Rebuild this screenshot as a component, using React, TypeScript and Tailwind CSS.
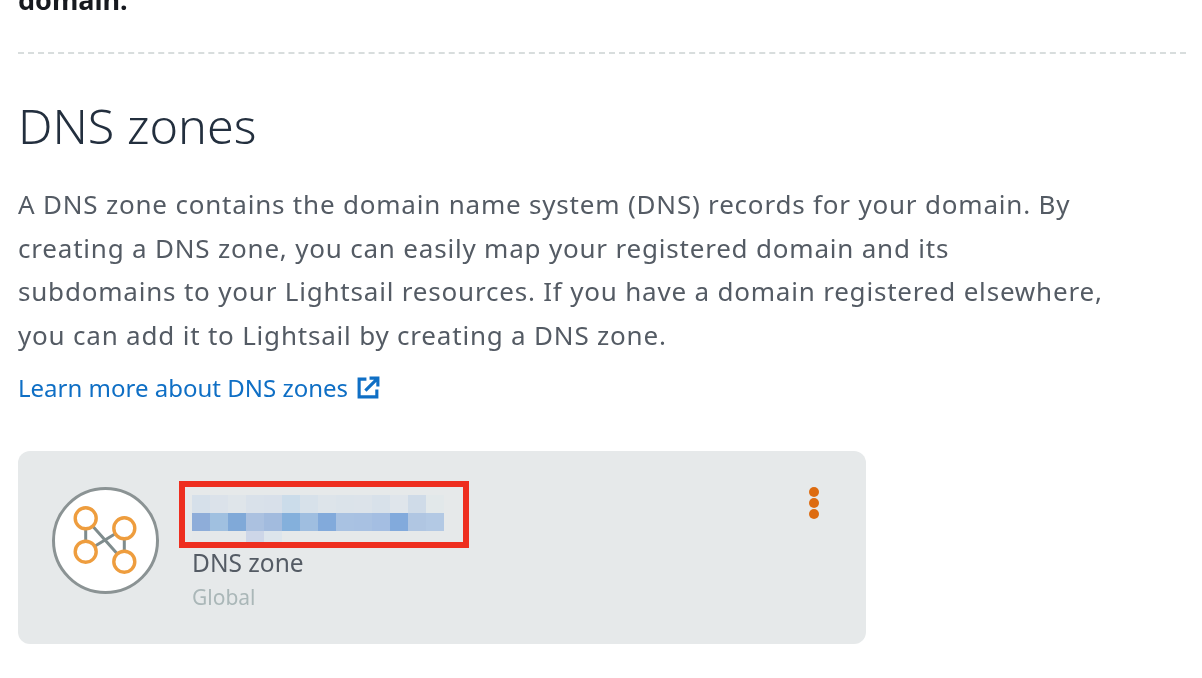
const pixelRows = [
  ['#d6e0ea', '#dbe2ea', '#dfe5ea', '#d9e1ea', '#d8e0ea', '#cbdcea', '#d7e1ea', '#dde4ea', '#dbe3ea', '#dce3ea', '#d8e1ea', '#dfe5eb', '#cfdbe8', '#e2e8ea'],
  ['#8eadd9', '#a0c0e0', '#80a9d8', '#abc1e0', '#a2bbde', '#84b0dc', '#9fbee0', '#82aadb', '#a9c2e2', '#a8c1e2', '#a4bee2', '#82aadc', '#b0c6e2', '#b3c9e4'],
  ['#e5e8ea', '#e5e8ea', '#e5e8ea', '#cdd6e8', '#dde5ec'],
];

function ZoneIcon() {
  return (
    <div className="w-[107px] h-[107px] shrink-0 rounded-full border-[3px] border-[#8b9394] bg-white flex items-center justify-center">
      <svg width="101" height="101" viewBox="55 490 101 101" fill="none">
        <path d="M85.7 518.3v33.4M124.3 528.3v33.4M85.7 551.7l38.6-23.4M85.7 518.3l38.6 43.4" stroke="#7f8c8d" strokeWidth="3" />
        {[[85.7, 518.3], [124.3, 528.3], [85.7, 551.7], [124.3, 561.7]].map(([cx, cy]) => (
          <circle key={cx + '-' + cy} cx={cx} cy={cy} r="10.5" fill="white" stroke="#ee9d3e" strokeWidth="3.4" />
        ))}
      </svg>
    </div>
  );
}

export default function App() {
  return (
    <div className="h-[678px] overflow-hidden bg-white px-[18px] font-['Noto_Sans',sans-serif] text-[#545b64] blur-[0.5px]">
      <p className="-mt-[18px] text-[27px] leading-[36px] font-bold text-[#16191f]">domain.</p>

      <div className="mt-[34px] w-[1168px] border-t-2 border-dashed border-[#d8dddd]" />

      <h1 className="mt-[39px] text-[48.5px] leading-[64px] font-light text-[#232f3e]">DNS zones</h1>

      <p className="mt-[26px] w-[1160px] text-[26px] tracking-[0.8px] leading-[43.67px] text-[#545b64]">
        A DNS zone contains the domain name system (DNS) records for your domain. By<br />
        creating a DNS zone, you can easily map your registered domain and its<br />
        subdomains to your Lightsail resources. If you have a domain registered elsewhere,<br />
        you can add it to Lightsail by creating a DNS zone.
      </p>

      <a className="mt-[12px] flex items-center gap-[8px] text-[24px] leading-[36px] text-[#0f6fc5]">
        Learn more about DNS zones
        <svg width="25" height="25" viewBox="0 0 24 24" fill="none" stroke="currentColor" strokeWidth="3">
          <path d="M10 4H3v17h17v-7" />
          <path d="M9 15L21 3M13 3h8v8" />
        </svg>
      </a>

      <div className="mt-[45px] w-[848px] h-[193px] rounded-[12px] bg-[#e6e9ea] pt-[36px] pl-[34px] pr-[47px] flex items-start">
        <ZoneIcon />
        <div className="ml-[20px] -mt-[6px]">
          <div className="w-[290px] h-[67px] border-[6px] border-[#ee2e1f] pl-[7px] pt-[8px] overflow-hidden">
            {pixelRows.map((row, i) => (
              <div key={i} className="flex h-[18px]">
                {row.map((c, j) => (
                  <div key={j} className="w-[18px] h-[18px]" style={{ backgroundColor: c }} />
                ))}
              </div>
            ))}
          </div>
          <p className="ml-[13px] mt-[-1px] text-[24.5px] leading-[32px] text-[#545b64]">DNS zone</p>
          <p className="ml-[13px] mt-[3px] text-[21px] leading-[30px] text-[#aab7b8]">Global</p>
        </div>
        <div className="ml-auto flex flex-col gap-[1px]">
          <span className="w-[10px] h-[10px] rounded-full bg-[#dd6b10]" />
          <span className="w-[10px] h-[10px] rounded-full bg-[#dd6b10]" />
          <span className="w-[10px] h-[10px] rounded-full bg-[#dd6b10]" />
        </div>
      </div>
    </div>
  );
}
